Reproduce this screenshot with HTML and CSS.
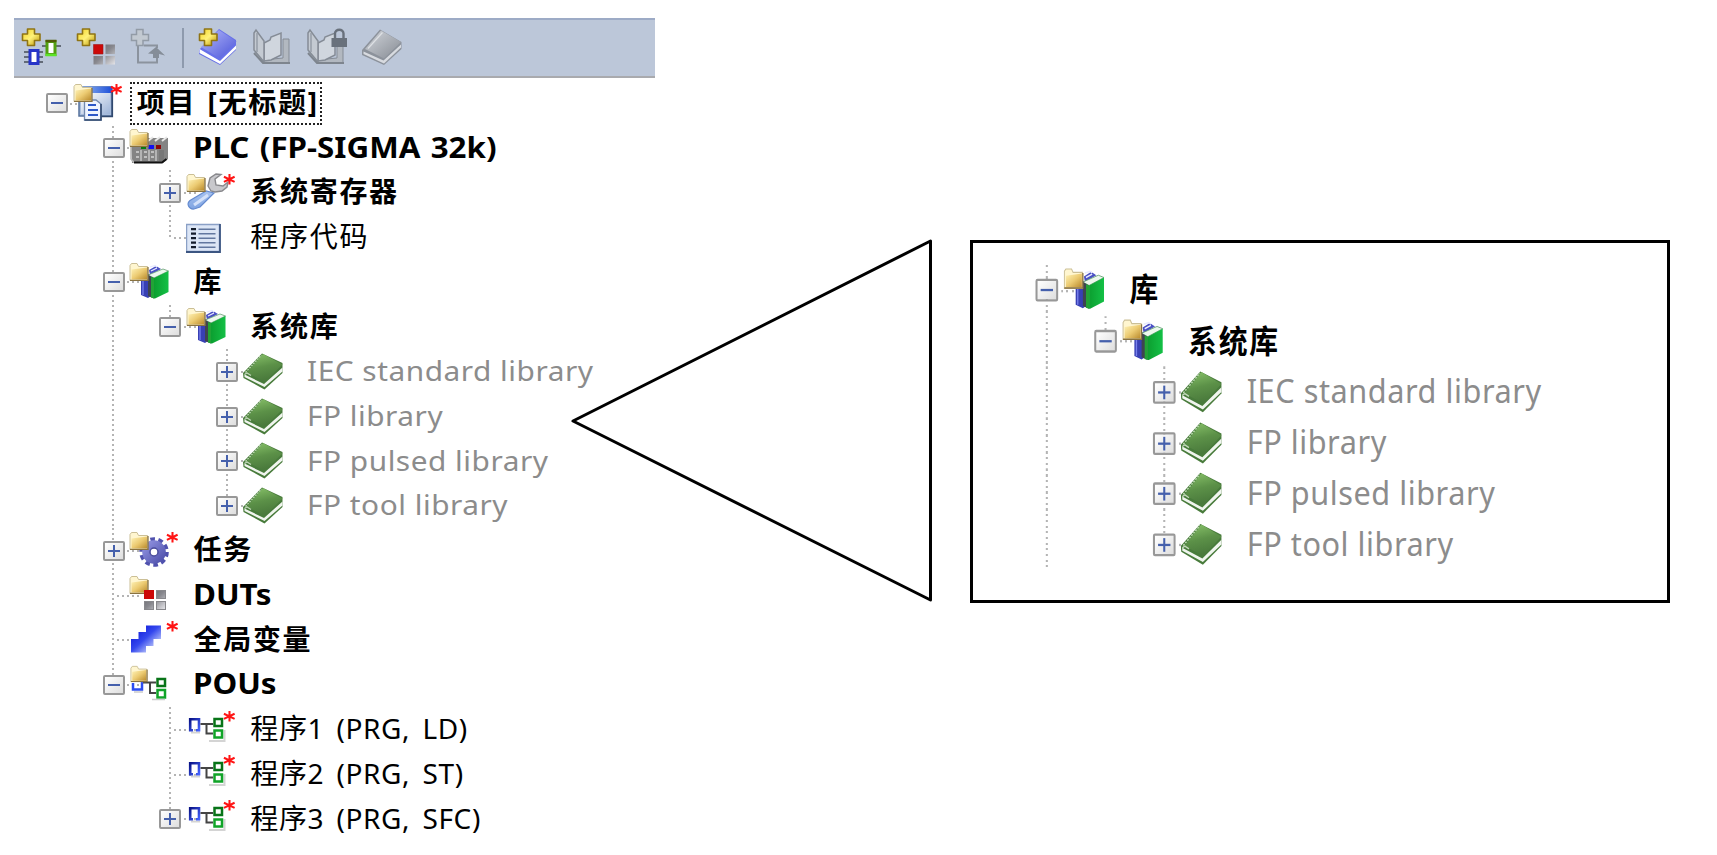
FILE: index.html
```html
<!DOCTYPE html>
<html lang="zh-CN">
<head>
<meta charset="utf-8">
<title>项目 [无标题]</title>
<link rel="stylesheet" href="styles.css">
</head>
<body>
<svg class="defs" aria-hidden="true">
  <defs>
    <linearGradient id="gold" x1="0" y1="0" x2="1" y2="1"><stop offset="0" stop-color="#fff3b8"/><stop offset=".5" stop-color="#eccb72"/><stop offset="1" stop-color="#b98a2c"/></linearGradient>
    <linearGradient id="plusfill" x1="0" y1="0" x2="1" y2="1"><stop offset="0" stop-color="#f0d020"/><stop offset=".5" stop-color="#fff27a"/><stop offset="1" stop-color="#b89000"/></linearGradient>
    <linearGradient id="green" x1="0" y1="0" x2=".3" y2="1"><stop offset="0" stop-color="#8cc66c"/><stop offset=".55" stop-color="#5c9148"/><stop offset="1" stop-color="#4a7a3c"/></linearGradient>
    <linearGradient id="leaf" x1="0" y1="0" x2="1" y2="0"><stop offset="0" stop-color="#0c9f30"/><stop offset="1" stop-color="#14c046"/></linearGradient>
    <linearGradient id="violet" x1="0" y1="0" x2="1" y2="1"><stop offset="0" stop-color="#b4b8fa"/><stop offset="1" stop-color="#4a54d8"/></linearGradient>
    <linearGradient id="gearfill" x1="0" y1="0" x2="1" y2="1"><stop offset="0" stop-color="#9a9ce8"/><stop offset="1" stop-color="#4648a4"/></linearGradient>
    <linearGradient id="grey" x1="0" y1="0" x2="1" y2="1"><stop offset="0" stop-color="#606066"/><stop offset=".5" stop-color="#88888e"/><stop offset="1" stop-color="#e4e4e8"/></linearGradient>
    <linearGradient id="page" x1="0" y1="0" x2="1" y2="1"><stop offset="0" stop-color="#ffffff"/><stop offset="1" stop-color="#9db4d8"/></linearGradient>
    <linearGradient id="bar" x1="0" y1="0" x2="1" y2="0"><stop offset="0" stop-color="#9cc0f4"/><stop offset="1" stop-color="#1d4fd8"/></linearGradient>
    <linearGradient id="step" x1="0" y1="0" x2="1" y2="1"><stop offset="0" stop-color="#1c2ae0"/><stop offset=".45" stop-color="#3448ee"/><stop offset="1" stop-color="#a8b4f8"/></linearGradient>
    <linearGradient id="silver" x1="0" y1="0" x2="1" y2="1"><stop offset="0" stop-color="#d2d6dc"/><stop offset="1" stop-color="#868b93"/></linearGradient>
    <linearGradient id="handle" x1="0" y1="0" x2="0" y2="1"><stop offset="0" stop-color="#a9c4f0"/><stop offset="1" stop-color="#7fa4e2"/></linearGradient>
    <linearGradient id="bluebox" x1="0" y1="0" x2="1" y2="1"><stop offset="0" stop-color="#0a1488"/><stop offset="1" stop-color="#4462ff"/></linearGradient>

    <symbol id="folder" viewBox="0 0 20 20"><path d="M1 3.500 2.500 1.500H8L9.500 4.500H18.500V18.500H1Z" fill="#fff6d0" stroke="#cbbf96"/><path d="M2.500 7.500 18 5.500V17.500H2.500Z" fill="url(#gold)"/><path d="M1 18.300H19V5" fill="none" stroke="#8a7340" stroke-width="1.300"/></symbol>
    <symbol id="star" viewBox="0 0 14 13"><path d="M7 .5V12M1 3.500 12.500 9M1 9 12.500 3.500" stroke="#ff1414" stroke-width="2.200"/></symbol>
    <symbol id="plus" viewBox="0 0 20 20"><path d="M6.500 1H13.500V6H19V12.500H13.500V17.500H6.500V12.500H1.500V6H6.500Z" fill="url(#plusfill)" stroke="#8f7414" stroke-width="1.600" stroke-linejoin="round"/></symbol>

    <symbol id="project" viewBox="0 0 52 40">
      <path d="M6 4H39V33H6Z" fill="#a9bddc" stroke="#55719c" stroke-width="1.500"/><path d="M8 10H37V31H8Z" fill="url(#page)"/><path d="M6 3.500H39V10H6Z" fill="url(#bar)"/><path d="M39.300 9V33.500H28" fill="none" stroke="#31496e" stroke-width="1.600"/>
      <path d="M11.500 17H23L28 21V37H11.500Z" fill="#eef4ff" stroke="#7189b0" stroke-width="1.300"/><path d="M11.500 37H28V21" fill="none" stroke="#31496e" stroke-width="1.600"/><path d="M15 22H23M15 27H25M15 32H25" stroke="#2c58c8" stroke-width="2"/>
      <use href="#folder" width="20" height="20"/><use href="#star" x="37" y="0" width="13" height="13"/>
    </symbol>
    <symbol id="plc" viewBox="0 0 52 40">
      <path d="M2 17 10 10H39V31L34 35H3Z" fill="#848484"/><path d="M2 14V31L5 34.500" fill="none" stroke="#b8b8b8" stroke-width="1.500"/><path d="M19 13 24 9M26 13 31 9M33 13 38 9" stroke="#e8e8e8" stroke-width="2"/><path d="M12 22V33M20 22V33M27 22V33" stroke="#b4b4b4" stroke-width="2"/><path d="M7 24H10M15 24H18M22 24H25M7 29H10M15 29H18M22 29H25" stroke="#d4d4d4" stroke-width="1.500"/><path d="M30 22H35V33H30Z" fill="#777"/>
      <path d="M12 17H17V21H12Z" fill="#087a10"/><path d="M19.500 17H25V21H19.500Z" fill="#1010f0"/><path d="M27 17H32V21H27Z" fill="#8c0808"/><path d="M5 34.500H33L37.500 31" fill="none" stroke="#111" stroke-width="2"/>
      <use href="#folder" width="20" height="20"/>
    </symbol>
    <symbol id="register" viewBox="0 0 52 40">
      <path d="M20 18 4 27.500C0 31 3 36.500 8 36L14 34 28 20Z" fill="url(#handle)" stroke="#638ad0" stroke-width="1.200"/><path d="M22 22 8 32" stroke="#d4e2fa" stroke-width="3"/>
      <path d="M25 18 22 13 24 5 30 1 35 1.500 29 6 30 12 37 13 42 9 41 14 36 18 29 19Z" fill="#c8c8cc" stroke="#88888c" stroke-width="1.400"/>
      <use href="#folder" width="20" height="20"/><use href="#star" x="37" y="0" width="13" height="13"/>
    </symbol>
    <symbol id="code" viewBox="0 0 52 40">
      <path d="M.5 6.500H33.500V33.500H.5Z" fill="#dce6f6" stroke="#8aa0c6" stroke-width="1.500"/><path d="M34 6V34H0" fill="none" stroke="#3c5682" stroke-width="1.800"/>
      <path d="M5 11.200H10M5 15.700H10M5 20.200H10M5 24.700H10M5 29.200H10" stroke="#151d2c" stroke-width="2.200"/><path d="M12.500 11.200H29.500M12.500 15.700H29.500M12.500 20.200H29.500M12.500 24.700H29.500M12.500 29.200H29.500" stroke="#6378a0" stroke-width="1.500"/>
    </symbol>
    <symbol id="books" viewBox="0 0 52 40">
      <path d="M12 12V33L19 36 22 34V12Z" fill="#3840b4"/><path d="M14 13V33" stroke="#7880ec" stroke-width="1.300"/><path d="M20 8 27 4 32 7 21 13Z" fill="#4a50c4"/><path d="M21 5 26 3.500 28 5M22 9 28 6" fill="none" stroke="#e8eaff" stroke-width="1.300"/>
      <path d="M19 13 34 7 39.500 9 25 16Z" fill="#edf8ee" stroke="#66a074" stroke-width=".8"/><path d="M19 13 25 16V36.500L19 34Z" fill="#3f4450"/><path d="M22 15 25 16V36.500L22 35.500Z" fill="#22a336"/><path d="M25 16 39.500 9V30L26 36.500H25Z" fill="url(#leaf)"/>
      <use href="#folder" width="20" height="20"/>
    </symbol>
    <symbol id="book" viewBox="0 0 52 40">
      <path d="M0 21 19 1.500 39.500 11V21L21.500 37.500 .5 26Z" fill="#487b3b"/><path d="M1.500 22.500 21 32 39.500 15.500V19.500L21.500 35 1.500 25Z" fill="#f0f5ee"/><path d="M3.500 21 20 2 39.500 12.500 22 29.500Z" fill="url(#green)"/><path d="M2.500 20.500 18.500 3" stroke="#c2e0b6" stroke-width="1.300" stroke-dasharray="1.700 1.200"/><path d="M1.500 22.500 4 21 8 23.500" fill="none" stroke="#c2d8ba" stroke-width="1.200"/>
    </symbol>
    <symbol id="task" viewBox="0 0 52 40">
      <circle cx="25" cy="21" r="12.800" fill="none" stroke="#5052ae" stroke-width="4" stroke-dasharray="4.600 3.440"/><circle cx="25" cy="21" r="11.800" fill="url(#gearfill)"/><circle cx="25" cy="21" r="4" fill="#fff" stroke="#4a4c9c" stroke-width="1.500"/>
      <use href="#folder" width="20" height="20"/><use href="#star" x="37" y="0" width="13" height="13"/>
    </symbol>
    <symbol id="dut" viewBox="0 0 52 40">
      <use href="#folder" width="20" height="20"/><path d="M15 15H25V24H15Z" fill="#cc0808"/><path d="M27 15H37V24H27ZM15 26H25V35H15ZM27 26H37V35H27Z" fill="#88888c"/><path d="M28 16H36V23H28ZM16 27H24V34H16ZM28 27H36V34H28Z" fill="url(#grey)"/>
    </symbol>
    <symbol id="vars" viewBox="0 0 52 40">
      <path d="M17 5.500H32V19H17Z" fill="url(#step)"/><path d="M9.500 12H24.500V26H9.500Z" fill="url(#step)"/><path d="M2 19H17V32.500H2Z" fill="url(#step)"/><use href="#star" x="37" y="0" width="13" height="13"/>
    </symbol>
    <symbol id="pous" viewBox="0 0 52 40">
      <path d="M4 18V24.500H13V16" fill="none" stroke="#2c4cf0" stroke-width="2.500"/><path d="M14 17.500H27M21 17.500V28H27" fill="none" stroke="#444" stroke-width="2"/><path d="M28.500 14H36V21H28.500Z" fill="#fff" stroke="#087418" stroke-width="2.500"/><path d="M28.500 25H36V32.500H28.500Z" fill="#fff" stroke="#10a428" stroke-width="2.500"/><path d="M5 27H14M23 34.500H36" stroke="#ccc" stroke-width="1.500"/>
      <use href="#folder" width="20" height="18"/>
    </symbol>
    <symbol id="prg" viewBox="0 0 52 40">
      <path d="M5 22.500H14M23 31H38.500V20" fill="none" stroke="#d4d4d4" stroke-width="2"/><path d="M7 20.300H4.200V9.300H13V20.300H10" fill="none" stroke="url(#bluebox)" stroke-width="2.600"/><path d="M14.500 14H27M20.500 14V23.500H27" fill="none" stroke="#444" stroke-width="2"/><path d="M28.500 9H36V16H28.500Z" fill="#fff" stroke="#087418" stroke-width="2.500"/><path d="M28.500 20.500H36V27.500H28.500Z" fill="#fff" stroke="#10a428" stroke-width="2.500"/>
      <use href="#star" x="37" y="0" width="13" height="13"/>
    </symbol>

    <symbol id="t-chip" viewBox="0 0 40 40">
      <path d="M3 24H22M3 29H22M3 34H22M21 18H40" stroke="#454e58" stroke-width="1.500"/><path d="M9 22.500H17V35.500H9Z" fill="#fff" stroke="#2634c8" stroke-width="3"/><path d="M26 13.500H34V26.500H26Z" fill="#fff" stroke="#52a010" stroke-width="3"/><path d="M24.500 13H35.500" stroke="#505c08" stroke-width="2.500"/><path d="M24.500 27H35.500" stroke="#5ce428" stroke-width="2.500"/><use href="#plus" width="20" height="20"/>
    </symbol>
    <symbol id="t-dut" viewBox="0 0 40 40">
      <use href="#plus" width="20" height="20"/><path d="M17.500 16.500H27V26H17.500Z" fill="#cc0808" stroke="#a01818" stroke-width=".6"/><path d="M29.500 16.500H39V26H29.500ZM17.500 28H27V36.500H17.500ZM29.500 28H39V36.500H29.500Z" fill="url(#grey)"/>
    </symbol>
    <symbol id="t-import" viewBox="0 0 40 40">
      <path d="M8 14V34.500H27V29M14 17.500H27V20" fill="none" stroke="#8b939e" stroke-width="2"/><path d="M18 25.500 26 19 35 27.500 29 26V30H23V26Z" fill="#858d98"/><path d="M6.500 1.500H13V6.500H18.500V12.500H13V17.500H6.500V12.500H1.500V6.500H6.500Z" fill="#c2c9d1" stroke="#929ba6" stroke-width="1.500"/>
    </symbol>
    <symbol id="t-newbook" viewBox="0 0 40 40">
      <path d="M1 22 21 1 38 12V22L22 37 1 26Z" fill="#6670e8"/><path d="M1.500 21 22 33 38 17.500V21L22 36 1.500 25Z" fill="#fff"/><path d="M3 19 21 2 38.500 13.500 22 30.500Z" fill="url(#violet)"/><use href="#plus" x="0" width="20" height="20"/>
    </symbol>
    <symbol id="t-open" viewBox="0 0 40 40">
      <path d="M10 32 30 30V11H36V34.500H10Z" fill="#b2b8c0" stroke="#858c96"/><path d="M11 33V15L17 12 18 9 28 5V27L18 32Z" fill="#d0d6de" stroke="#858c96" stroke-width="1.500"/><path d="M1 5 3 2 11 13V34L1 22Z" fill="#c4cad2" stroke="#858c96" stroke-width="1.500"/><path d="M4 5V24" stroke="#969da7" stroke-width="1.500"/><path d="M1 25 10 35H37" fill="none" stroke="#7e858e" stroke-width="2"/>
    </symbol>
    <symbol id="t-lock" viewBox="0 0 40 40">
      <use href="#t-open" width="40" height="40"/><path d="M28 10V5.500C28 .5 36.500 .5 36.500 5.500V10" fill="none" stroke="#69717c" stroke-width="2.400"/><path d="M24.500 10H40V19H24.500Z" fill="#69717c"/>
    </symbol>
    <symbol id="t-close" viewBox="0 0 40 40">
      <path d="M0 22 18 1.500 39.500 14V21L22 37 0 27Z" fill="#8c929b"/><path d="M1.500 23.500 21.500 32.500 39 16.500V19.500L22 35.500 1.500 26Z" fill="#d8dbe0"/><path d="M3 21 19 2.500 39 14 22 30.500Z" fill="url(#silver)"/><path d="M6 20.500 20.500 4.500" stroke="#dde0e4" stroke-width="1.200"/>
    </symbol>
  </defs>
</svg>

<main class="page">
  <section class="navigator">
    <div class="toolbar">
      <svg class="tool"><use href="#t-chip"/></svg>
      <svg class="tool"><use href="#t-dut"/></svg>
      <svg class="tool"><use href="#t-import"/></svg>
      <span class="divider"></span>
      <svg class="tool"><use href="#t-newbook"/></svg>
      <svg class="tool"><use href="#t-open"/></svg>
      <svg class="tool"><use href="#t-lock"/></svg>
      <svg class="tool"><use href="#t-close"/></svg>
    </div>
    <div class="tree">
      <div class="row"><i class="cell"><b class="box"></b></i><svg class="icon"><use href="#project"/></svg><span class="focus"><span class="label bold">项目 [无标题]</span></span></div>
      <div class="row"><i class="cell"></i><i class="cell line"><b class="box"></b></i><svg class="icon"><use href="#plc"/></svg><span class="label bold latin-bold">PLC (FP-SIGMA 32k)</span></div>
      <div class="row"><i class="cell"></i><i class="cell line"></i><i class="cell line"><b class="box more"></b></i><svg class="icon"><use href="#register"/></svg><span class="label bold">系统寄存器</span></div>
      <div class="row"><i class="cell"></i><i class="cell line"></i><i class="cell line end stub"></i><svg class="icon"><use href="#code"/></svg><span class="label">程序代码</span></div>
      <div class="row"><i class="cell"></i><i class="cell line"><b class="box"></b></i><svg class="icon"><use href="#books"/></svg><span class="label bold">库</span></div>
      <div class="row"><i class="cell"></i><i class="cell line"></i><i class="cell line end"><b class="box"></b></i><svg class="icon"><use href="#books"/></svg><span class="label bold">系统库</span></div>
      <div class="row"><i class="cell"></i><i class="cell line"></i><i class="cell"></i><i class="cell line"><b class="box more"></b></i><svg class="icon"><use href="#book"/></svg><span class="label lib">IEC standard library</span></div>
      <div class="row"><i class="cell"></i><i class="cell line"></i><i class="cell"></i><i class="cell line"><b class="box more"></b></i><svg class="icon"><use href="#book"/></svg><span class="label lib">FP library</span></div>
      <div class="row"><i class="cell"></i><i class="cell line"></i><i class="cell"></i><i class="cell line"><b class="box more"></b></i><svg class="icon"><use href="#book"/></svg><span class="label lib">FP pulsed library</span></div>
      <div class="row"><i class="cell"></i><i class="cell line"></i><i class="cell"></i><i class="cell line end"><b class="box more"></b></i><svg class="icon"><use href="#book"/></svg><span class="label lib">FP tool library</span></div>
      <div class="row"><i class="cell"></i><i class="cell line"><b class="box more"></b></i><svg class="icon"><use href="#task"/></svg><span class="label bold">任务</span></div>
      <div class="row"><i class="cell"></i><i class="cell line stub"></i><svg class="icon"><use href="#dut"/></svg><span class="label bold latin-bold">DUTs</span></div>
      <div class="row"><i class="cell"></i><i class="cell line stub"></i><svg class="icon"><use href="#vars"/></svg><span class="label bold">全局变量</span></div>
      <div class="row"><i class="cell"></i><i class="cell line end"><b class="box"></b></i><svg class="icon"><use href="#pous"/></svg><span class="label bold latin-bold">POUs</span></div>
      <div class="row"><i class="cell"></i><i class="cell"></i><i class="cell line stub"></i><svg class="icon"><use href="#prg"/></svg><span class="label prg">程序1 (PRG, LD)</span></div>
      <div class="row"><i class="cell"></i><i class="cell"></i><i class="cell line stub"></i><svg class="icon"><use href="#prg"/></svg><span class="label prg">程序2 (PRG, ST)</span></div>
      <div class="row"><i class="cell"></i><i class="cell"></i><i class="cell line end"><b class="box more"></b></i><svg class="icon"><use href="#prg"/></svg><span class="label prg">程序3 (PRG, SFC)</span></div>
    </div>
  </section>
  <svg class="pointer" viewBox="0 0 362 366"><path d="M3 183 360.500 3V362Z" fill="none" stroke="#000" stroke-width="3" stroke-linejoin="round"/></svg>
  <section class="callout">
    <div class="tree enlarged">
      <div class="row"><i class="cell line"><b class="box"></b></i><svg class="icon"><use href="#books"/></svg><span class="label bold">库</span></div>
      <div class="row"><i class="cell line"></i><i class="cell line end"><b class="box"></b></i><svg class="icon"><use href="#books"/></svg><span class="label bold">系统库</span></div>
      <div class="row"><i class="cell line"></i><i class="cell"></i><i class="cell line"><b class="box more"></b></i><svg class="icon"><use href="#book"/></svg><span class="label lib">IEC standard library</span></div>
      <div class="row"><i class="cell line"></i><i class="cell"></i><i class="cell line"><b class="box more"></b></i><svg class="icon"><use href="#book"/></svg><span class="label lib">FP library</span></div>
      <div class="row"><i class="cell line"></i><i class="cell"></i><i class="cell line"><b class="box more"></b></i><svg class="icon"><use href="#book"/></svg><span class="label lib">FP pulsed library</span></div>
      <div class="row"><i class="cell line"></i><i class="cell"></i><i class="cell line end"><b class="box more"></b></i><svg class="icon"><use href="#book"/></svg><span class="label lib">FP tool library</span></div>
    </div>
  </section>
</main>
</body>
</html>
```

FILE: styles.css
```css
* { box-sizing: border-box; }

body {
  margin: 0;
  background: #fff;
  color: #000;
  font-family: "Noto Sans", "Noto Sans CJK SC", sans-serif;
  overflow: hidden;
}

.defs { position: absolute; width: 0; height: 0; }

.page {
  display: flex;
  align-items: flex-start;
  width: 1717px;
  height: 855px;
  padding: 18px 0 0 14px;
}

.navigator { flex: none; width: 641px; }

.toolbar {
  display: flex;
  align-items: center;
  gap: 14.5px;
  height: 60px;
  padding-left: 7px;
  background: #bcc7d9;
  border-top: 2px solid #9dabc6;
  border-bottom: 2px solid #a9aaae;
}

.tool { flex: none; width: 40px; height: 40px; }

.divider {
  flex: none;
  width: 2px;
  height: 40px;
  margin: 0 0 0 -3px;
  background: #8e9aad;
}

.tree { padding: 3px 0 0 14.4px; }

.row {
  display: flex;
  align-items: center;
  height: 44.74px;
}

/* One indentation step; its guide line runs through the middle. */
.cell {
  position: relative;
  flex: none;
  display: flex;
  align-items: center;
  justify-content: center;
  align-self: stretch;
  width: 56.8px;
}

.line::before {
  content: "";
  position: absolute;
  left: 27.2px;
  top: 0;
  bottom: 0;
  width: 2px;
  background: repeating-linear-gradient(to bottom, #b4b4b4 0 2px, transparent 2px 4.97px);
}

.line.end::before { bottom: 50%; }

.stub::after,
.cell:has(.box)::after {
  content: "";
  position: absolute;
  left: 32px;
  top: 21.5px;
  width: 24px;
  height: 2px;
  background: repeating-linear-gradient(to right, #b4b4b4 0 2px, transparent 2px 5px);
}

.cell:has(.box)::after { left: 42px; width: 14px; }

.box {
  position: relative;
  width: 22px;
  height: 20px;
  border: 2px solid #989898;
  border-radius: 2px;
  background: linear-gradient(135deg, #fff, #dedede);
}

.box::before,
.box.more::after {
  content: "";
  position: absolute;
  background: #4560ac;
}

.box::before { left: 3px; top: 7px; width: 12px; height: 2px; }
.box.more::after { left: 8px; top: 2px; width: 2px; height: 12px; }

.icon {
  position: relative;
  flex: none;
  width: 52px;
  height: 40px;
  margin-left: -12.5px;
  overflow: visible;
}

.label {
  flex: none;
  margin-left: 12px;
  padding-bottom: 3px;
  font-size: 28px;
  line-height: 40px;
  letter-spacing: 1.7px;
  white-space: pre;
  transform-origin: 0 50%;
}

.bold { font-weight: 700; }
.latin-bold { letter-spacing: 0; word-spacing: 2px; transform: scaleX(1.118); }
.lib { color: #8c8c8c; letter-spacing: 0.5px; transform: scaleX(1.064); }
.prg { letter-spacing: 0.6px; word-spacing: 4.5px; }

.focus {
  flex: none;
  display: flex;
  align-items: center;
  width: 192px;
  height: 43px;
  margin-left: 5px;
  padding-left: 5px;
  border: 2px dotted #222;
}

.focus .label { margin-left: 0; word-spacing: 2.5px; }

.pointer {
  position: relative;
  flex: none;
  width: 362px;
  height: 366px;
  margin: 220px 0 0 -85px;
}

.callout {
  flex: none;
  width: 700px;
  height: 363px;
  margin: 221.5px 0 0 38px;
  padding: 22px 0 0 44.5px;
  border: 3px solid #000;
}

.enlarged {
  padding: 0;
  transform: scale(1.03, 1.138);
  transform-origin: 0 0;
}
```
